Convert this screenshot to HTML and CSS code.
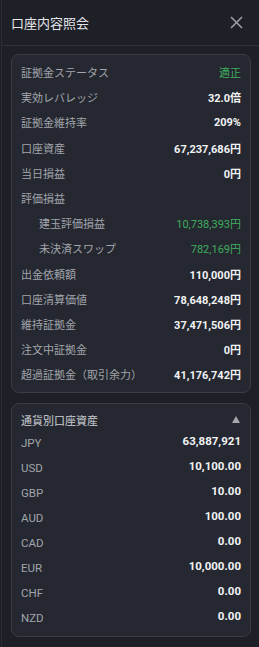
FILE: index.html
```html
<!DOCTYPE html>
<html lang="ja">
<head>
<meta charset="utf-8">
<title>口座内容照会</title>
<link rel="stylesheet" href="styles.css">
</head>
<body>
<div class="panel">
  <header class="header">
    <h1 class="title">口座内容照会</h1>
    <svg class="close" width="13" height="13" viewBox="0 0 13 13"><path d="M1 1L12 12M12 1L1 12" stroke="#9b9ea5" stroke-width="1.6" fill="none"/></svg>
  </header>
  <div class="content">
    <section class="card summary">
      <div class="row"><span class="label">証拠金ステータス</span><span class="value green normal">適正</span></div>
      <div class="row"><span class="label">実効レバレッジ</span><span class="value">32.0倍</span></div>
      <div class="row"><span class="label">証拠金維持率</span><span class="value">209%</span></div>
      <div class="row"><span class="label">口座資産</span><span class="value">67,237,686円</span></div>
      <div class="row"><span class="label">当日損益</span><span class="value">0円</span></div>
      <div class="row"><span class="label">評価損益</span><span class="value"></span></div>
      <div class="row sub"><span class="label">建玉評価損益</span><span class="value green normal">10,738,393円</span></div>
      <div class="row sub"><span class="label">未決済スワップ</span><span class="value green normal">782,169円</span></div>
      <div class="row"><span class="label">出金依頼額</span><span class="value">110,000円</span></div>
      <div class="row"><span class="label">口座清算価値</span><span class="value">78,648,248円</span></div>
      <div class="row"><span class="label">維持証拠金</span><span class="value">37,471,506円</span></div>
      <div class="row"><span class="label">注文中証拠金</span><span class="value">0円</span></div>
      <div class="row"><span class="label">超過証拠金（取引余力）</span><span class="value">41,176,742円</span></div>
    </section>
    <section class="card currency">
      <div class="card-head"><span class="head-title">通貨別口座資産</span><span class="caret"></span></div>
      <div class="row cur"><span class="label">JPY</span><span class="value">63,887,921</span></div>
      <div class="row cur"><span class="label">USD</span><span class="value">10,100.00</span></div>
      <div class="row cur"><span class="label">GBP</span><span class="value">10.00</span></div>
      <div class="row cur"><span class="label">AUD</span><span class="value">100.00</span></div>
      <div class="row cur"><span class="label">CAD</span><span class="value">0.00</span></div>
      <div class="row cur"><span class="label">EUR</span><span class="value">10,000.00</span></div>
      <div class="row cur"><span class="label">CHF</span><span class="value">0.00</span></div>
      <div class="row cur"><span class="label">NZD</span><span class="value">0.00</span></div>
    </section>
  </div>
</div>
</body>
</html>
```
FILE: styles.css
```css
* { box-sizing: border-box; }
html, body {
  margin: 0;
  padding: 0;
  background: #1e2027;
}
body {
  width: 259px;
  height: 647px;
  overflow: hidden;
  font-family: Roboto, "Noto Sans CJK JP", sans-serif;
}
.panel {
  height: 647px;
  border-left: 1px solid #2a2d34;
  margin-left: 1px;
}
.header {
  height: 46px;
  border-bottom: 1px solid #2e3139;
  display: flex;
  align-items: center;
  justify-content: space-between;
  padding: 0 16px 0 9px;
}
.title {
  margin: 0;
  font-size: 13px;
  font-weight: 400;
  color: #e6e7ea;
  font-family: "Noto Sans CJK JP", sans-serif;
  line-height: 1;
}
.close { display: block; margin-top: 0; }
.content {
  padding: 8px 8px 0 9px;
  display: flex;
  flex-direction: column;
  gap: 10px;
}
.card {
  background: #252830;
  border: 1px solid #3a3d45;
  border-radius: 8px;
  padding: 4.5px 9px 5px 9px;
}
.row {
  height: 25.2px;
  display: flex;
  align-items: center;
  justify-content: space-between;
}
.label {
  font-family: "Noto Sans CJK JP", sans-serif;
  font-size: 11px;
  color: #a2a5ac;
}
.sub .label { padding-left: 18px; }
.value {
  font-size: 11px;
  font-weight: 700;
  color: #f2f3f5;
}
.value.green { color: #3fae5e; }
.value.normal { font-weight: 400; }
.currency { padding: 6px 9px 6px 9px; }
.card-head {
  height: 20px;
  display: flex;
  align-items: center;
  justify-content: space-between;
}
.head-title {
  font-family: "Noto Sans CJK JP", sans-serif;
  font-size: 11px;
  color: #b3b6bc;
  font-weight: 500;
}
.caret {
  width: 0;
  height: 0;
  border-left: 4.5px solid transparent;
  border-right: 4.5px solid transparent;
  border-bottom: 7px solid #a4a7ae;
  margin-right: 1px;
}
.row.cur { height: 25px; }
.cur .label {
  font-family: Roboto, sans-serif;
  font-size: 11.5px;
  padding-top: 2px;
}
.cur .value {
  font-size: 11.5px;
  padding-bottom: 2px;
}
```
